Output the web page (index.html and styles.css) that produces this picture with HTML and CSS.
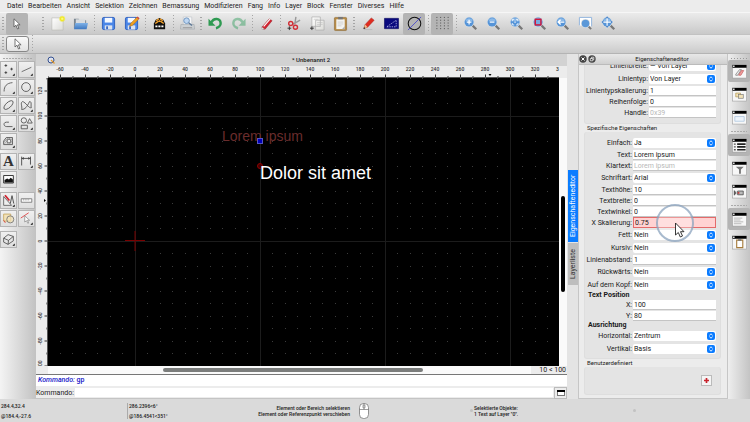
FILE: index.html
```
<!DOCTYPE html>
<html lang="de">
<head>
<meta charset="utf-8">
<title>Unbenannt 2</title>
<link rel="stylesheet" href="styles.css">
</head>
<body>

<!-- Shared icon parts -->
<svg class="defs" width="0" height="0">
	<defs>
		<linearGradient id="paper" x1="0" y1="0" x2="1" y2="1"><stop offset="0" stop-color="#ffffff"/><stop offset="1" stop-color="#dcdcd8"/></linearGradient>
		<radialGradient id="sun"><stop offset="0" stop-color="#ffffa0"/><stop offset="0.5" stop-color="#f0e820"/><stop offset="1" stop-color="#f0e820" stop-opacity="0"/></radialGradient>
		<linearGradient id="blue" x1="0" y1="0" x2="0" y2="1"><stop offset="0" stop-color="#7fb2e8"/><stop offset="1" stop-color="#3f78c0"/></linearGradient>
		<symbol id="arrow" viewBox="0 0 8 12"><path d="M1 .8V9l2-1.8L4.5 11l1.4-.6L4.4 6.8h2.7z" fill="#fff" stroke="#555" stroke-width=".8"/></symbol>
		<symbol id="lens" viewBox="0 0 16 16"><path d="M9.5 9.5l4.6 4.6" stroke="#777" stroke-width="2.4"/><circle cx="6.5" cy="6.5" r="5.6" fill="#d3dbe2"/><circle cx="6.5" cy="6.5" r="4.8" fill="#5594d8"/><path d="M2.6 5.5a4 4 0 0 1 7.8 0z" fill="#8bb9e8"/></symbol>
		<symbol id="floppy" viewBox="0 0 16 16"><rect x="1.5" y="1.5" width="13" height="13" rx="1.5" fill="#4a86e8" stroke="#2f60bd"/><path d="M4 2h8v5H4z" fill="#f4f8ff"/><path d="M4 10h8v4.500H4z" fill="#dce3ee"/><path d="M5.500 11h2v3h-2z" fill="#3b6ac4"/></symbol>
		<symbol id="window" viewBox="0 0 16 16"><rect x=".5" y="1" width="15" height="14" fill="#f7f7f7" stroke="#999" stroke-width=".6"/><path d="M.5 1h15v3H.5z" fill="#000"/><path d="M1.200 1.700h1.500v1.500H1.200z" fill="#fff"/></symbol>
		<symbol id="corner" viewBox="0 0 17 17"><path d="M15.500 13v2.500H13z" fill="#000"/></symbol>
		<symbol id="updown" viewBox="0 0 8 8"><rect width="8" height="8" rx="2" fill="#0a7bff"/><path d="M2.400 3.300L4 1.800l1.600 1.500M2.400 4.700L4 6.200l1.600-1.500" fill="none" stroke="#fff" stroke-width=".9"/></symbol>
	</defs>
</svg>

<nav class="menubar">
	<a href="#">Datei</a><a href="#">Bearbeiten</a><a href="#">Ansicht</a><a href="#">Selektion</a><a href="#">Zeichnen</a><a href="#">Bemassung</a><a href="#">Modifizieren</a><a href="#">Fang</a><a href="#">Info</a><a href="#">Layer</a><a href="#">Block</a><a href="#">Fenster</a><a href="#">Diverses</a><a href="#">Hilfe</a>
</nav>

<div class="toolbar">
	<span class="grip"></span>
	<button class="tool pressed" aria-label="Zurücksetzen"><svg class="pointer"><use href="#arrow"/></svg></button>
	<span class="grip grip-gap"></span>
	<button class="tool" aria-label="Neu"><svg viewBox="0 0 16 16"><path d="M2 2h12v13H2z" fill="url(#paper)" stroke="#b5b5ae" stroke-width=".6"/><circle cx="13" cy="3" r="3.800" fill="url(#sun)"/></svg></button>
	<button class="tool" aria-label="Öffnen"><svg viewBox="0 0 16 16"><path d="M1 13V3h5l1 1.500h7V13z" fill="#7b8792"/><path d="M3 3.500h10v5H3z" fill="#d9dcdf"/><path d="M2.500 7.500H16L14.500 14H1z" fill="url(#blue)"/></svg></button>
	<span class="sep"></span>
	<button class="tool" aria-label="Speichern"><svg><use href="#floppy"/></svg></button>
	<button class="tool" aria-label="Speichern unter"><svg viewBox="0 0 16 16"><use href="#floppy"/><path d="M6 11l1-3 7-7 2 2-7 7z" fill="#f0a020" stroke="#a86410" stroke-width=".5"/><path d="M13.500 1.500L14.500.5l2 2-1 1z" fill="#d04040"/></svg></button>
	<span class="sep"></span>
	<button class="tool" aria-label="SVG Export"><svg viewBox="0 0 16 16"><path d="M8 2l4 2 2 4v6H2V8l2-4z" fill="#111"/><path d="M4.500 5l3-2M11.500 5l-3-2M3.500 8L7 5.500M12.500 8L9 5.500M8 4.500v2" stroke="#f6a32c" stroke-width="1.400"/><path d="M3 8.800h10v4.400H3z" fill="#111"/><path d="M3.600 11h8.800" stroke="#fff" stroke-width="1.800" stroke-dasharray="2.200 1"/></svg></button>
	<span class="sep"></span>
	<button class="tool" aria-label="Druckvorschau"><svg viewBox="0 0 16 16"><path d="M3.500 1h9v9h-9z" fill="#f5f6f8" stroke="#b0b6bd" stroke-width=".5"/><path d="M1 9h14l.5 5H.5z" fill="#ccd0d3" stroke="#9da3a8" stroke-width=".6"/><path d="M3 12.500h10" stroke="#888" stroke-width=".8"/><circle cx="7" cy="5" r="3" fill="#bdd6f2" stroke="#6d94bf"/><path d="M9.200 7.200l3.600 3" stroke="#5d7896" stroke-width="1.500"/></svg></button>
	<span class="grip"></span>
	<button class="tool" aria-label="Rückgängig"><svg viewBox="0 0 16 16"><path d="M3.500 7C6 1.500 13 2 13.500 7.500c.2 3-2.500 5-5 5.500" fill="none" stroke="#2f9a52" stroke-width="2.600"/><path d="M.5 3v7.500H8z" fill="#2f9a52"/></svg></button>
	<button class="tool faded" aria-label="Wiederherstellen"><svg viewBox="0 0 16 16"><path d="M12.500 7C10 1.500 3 2 2.500 7.500c-.2 3 2.500 5 5 5.500" fill="none" stroke="#40a468" stroke-width="2.600"/><path d="M15.500 3v7.500H8z" fill="#40a468"/></svg></button>
	<span class="sep"></span>
	<button class="tool" aria-label="Löschen"><svg viewBox="0 0 16 16"><path d="M3 12l8-9 3 2-7.500 9H4z" fill="#d32430" stroke="#8e1f28" stroke-width=".5"/><path d="M5 11l7-8" stroke="#fff" stroke-width="1.200"/><path d="M2.500 11.500L6 14H3z" fill="#eee" stroke="#999" stroke-width=".4"/></svg></button>
	<span class="sep"></span>
	<button class="tool" aria-label="Ausschneiden"><svg viewBox="0 0 16 16"><path d="M9.500 1L8.300 9M14 4.500L6 9" stroke="#999" stroke-width="1.500"/><circle cx="4" cy="8" r="2.200" fill="none" stroke="#d12f36" stroke-width="1.500"/><circle cx="9" cy="12" r="2.200" fill="none" stroke="#d12f36" stroke-width="1.500"/><path d="M.5 13h4M2.500 11v4" stroke="#222" stroke-width=".9"/></svg></button>
	<button class="tool" aria-label="Kopieren"><svg viewBox="0 0 16 16"><path d="M2 1h9v10H2zM6 4.500h9V15H6z" fill="url(#paper)" stroke="#aaa" stroke-width=".7"/><path d="M7.500 7h6M7.500 9h6M7.500 11h4M4 3.500h5" stroke="#bbb" stroke-width=".6"/><path d="M0 13h4M2 11v4" stroke="#222" stroke-width=".9"/></svg></button>
	<button class="tool" aria-label="Einfügen"><svg viewBox="0 0 16 16"><rect x="1.500" y="1.500" width="13" height="14" rx="1" fill="#b68a45" stroke="#8a6630" stroke-width=".6"/><path d="M3.500 3.500h9v10.500h-9z" fill="#f3f3f0"/><path d="M5.500 1h5v2.500h-5z" fill="#777"/><path d="M5 6.500h6M5 8.500h6M5 10.500h4" stroke="#bbb" stroke-width=".6"/><path d="M12.500 11v3h-3z" fill="#aaa"/></svg></button>
	<span class="grip"></span>
	<button class="tool" aria-label="Stift"><svg viewBox="0 0 16 16"><path d="M3 13l1.500-4L11 2l3 2.500L7 12z" fill="#e02c20" stroke="#9c211a" stroke-width=".5"/><path d="M3 13l1.500-4L7 12z" fill="#efc18a"/><path d="M2.500 13.800l1-2 1.200 1.400z" fill="#222"/><path d="M3 14.500h9" stroke="#aaa" stroke-width=".6"/></svg></button>
	<button class="tool" aria-label="Entwurf"><svg viewBox="0 0 16 16"><path d="M.5 2.500h15v11H.5z" fill="#09097e" stroke="#04045a" stroke-width=".6"/><path d="M3 11.500l10-7v7z" fill="none" stroke="#c8c8f0" stroke-width=".8" stroke-dasharray="1.500 1"/></svg></button>
	<button class="tool pressed" aria-label="Kreis"><svg viewBox="0 0 16 16"><circle cx="8" cy="8" r="6.700" fill="none" stroke="#111" stroke-width="1.100"/><path d="M1 15L15 1" stroke="#3a3ad0" stroke-width=".8"/></svg></button>
	<span class="sep"></span>
	<button class="tool pressed" aria-label="Raster"><svg viewBox="0 0 16 16"><path d="M2 1v14M6 1v14M10 1v14M14 1v14" stroke="#444" stroke-dasharray="1 2"/></svg></button>
	<span class="sep"></span>
	<button class="tool" aria-label="Vergrößern"><svg viewBox="0 0 16 16"><use href="#lens"/><path d="M4 6.500h5M6.500 4v5" stroke="#fff" stroke-width="1.300"/></svg></button>
	<button class="tool" aria-label="Verkleinern"><svg viewBox="0 0 16 16"><use href="#lens"/><path d="M4 6.500h5" stroke="#fff" stroke-width="1.300"/></svg></button>
	<button class="tool" aria-label="Alles zeigen"><svg viewBox="0 0 16 16"><use href="#lens"/><path d="M3.500 5.500v-2h2M7.500 3.500h2v2M9.500 7.500v2h-2M5.500 9.500h-2v-2M5.500 6.500h2" fill="none" stroke="#fff" stroke-width=".9"/></svg></button>
	<button class="tool" aria-label="Auswahl zeigen"><svg viewBox="0 0 16 16"><use href="#lens"/><rect x="3.500" y="3.500" width="6" height="6" fill="#79a9df" stroke="#d4163a" stroke-width="1.500"/></svg></button>
	<button class="tool" aria-label="Vorherige Ansicht"><svg viewBox="0 0 16 16"><use href="#lens"/><path d="M3 6.500h7M6 4L3.300 6.500 6 9" fill="none" stroke="#fff" stroke-width="1.400"/></svg></button>
	<button class="tool" aria-label="Fenster vergrößern"><svg viewBox="0 0 16 16"><path d="M1.500 10V1.500h13V11" fill="#fff" stroke="#8fb3dd"/><path d="M10 10l4 4" stroke="#777" stroke-width="2"/><circle cx="8" cy="8" r="4.800" fill="#d3dbe2"/><circle cx="8" cy="8" r="4" fill="#5b98d8"/></svg></button>
	<button class="tool" aria-label="Verschieben"><svg viewBox="0 0 16 16"><use href="#lens"/><path d="M6.500 0v13M0 6.500h13" stroke="#fff" stroke-width="1.200"/><path d="M6.500 0L8 2.500H5zM6.500 13L8 10.500H5zM0 6.500L2.500 5v3zM13 6.500L10.500 5v3z" fill="#4a82c4"/></svg></button>
</div>

<div class="options">
	<span class="grip"></span>
	<button class="option" aria-label="Auswahl"><svg class="pointer"><use href="#arrow"/></svg></button>
	<span class="sep"></span>
</div>

<div class="work">
	<div class="palette">
		<span class="dash"></span>
		<div class="tools">
			<button aria-label="Punkt"><svg viewBox="0 0 17 17"><path d="M4 4h3M5.500 2.500v3M10.500 8h3M12 6.500v3M4 12h3M5.500 10.500v3" stroke="#333" stroke-width=".9"/><use href="#corner"/></svg></button>
			<button aria-label="Linie"><svg viewBox="0 0 17 17"><path d="M3 11l11-5" stroke="#555" stroke-width=".9"/><use href="#corner"/></svg></button>
			<button aria-label="Bogen"><svg viewBox="0 0 17 17"><path d="M3.500 13c0-6 3-9.500 9.500-10" fill="none" stroke="#555"/><use href="#corner"/></svg></button>
			<button aria-label="Kreis"><svg viewBox="0 0 17 17"><circle cx="8" cy="8" r="5" fill="none" stroke="#555"/><use href="#corner"/></svg></button>
			<button aria-label="Ellipse"><svg viewBox="0 0 17 17"><ellipse cx="8.500" cy="8" rx="6.500" ry="3" transform="rotate(-43 8.500 8)" fill="none" stroke="#555"/><use href="#corner"/></svg></button>
			<button aria-label="Spline"><svg viewBox="0 0 17 17"><path d="M4 4c-3 2 0 5-1 9 4 0 6-3 9-9 3 0 1 5 2 7-3 1-6-6-10-7z" fill="none" stroke="#555"/><use href="#corner"/></svg></button>
			<button aria-label="Polylinie"><svg viewBox="0 0 17 17"><path d="M13 12H6.500C2.500 12 2.500 7 6 7h3" fill="none" stroke="#555"/><use href="#corner"/></svg></button>
			<button aria-label="Form"><svg viewBox="0 0 17 17"><circle cx="5.500" cy="5" r="3" fill="none" stroke="#555"/><path d="M12 3l3 5H9.500zM2.500 10.500h7v4h-7z" fill="none" stroke="#555"/><use href="#corner"/></svg></button>
			<button aria-label="Schraffur"><svg viewBox="0 0 17 17"><path d="M3 12V8l3-4h7v8z" fill="#ddd" stroke="#555"/><path d="M4 11l7-7M6 12l7-7M3.500 9l5-5M9 12l4-4" stroke="#777" stroke-width=".6"/><circle cx="9" cy="8" r="2.200" fill="#eee" stroke="#555"/><use href="#corner"/></svg></button>
		</div>
		<div class="tools">
			<button class="letter" aria-label="Text">A</button>
			<button aria-label="Bemaßung"><svg viewBox="0 0 17 17"><path d="M3 3v10M13 3v9M3 5h10" fill="none" stroke="#444"/><path d="M3 5l2.500-1.500v3zM13 5l-2.500-1.500v3z" fill="#444"/><use href="#corner"/></svg></button>
			<button aria-label="Bild"><svg viewBox="0 0 17 17"><path d="M3 4h11v8.500H3z" fill="#fff" stroke="#222"/><path d="M4 12v-3l3-1.500 2 1 2-2 2.500 2v3.500z" fill="#111"/></svg></button>
		</div>
		<div class="tools spaced">
			<button aria-label="Modifizieren"><svg viewBox="0 0 17 17"><path d="M3 4v10h9z" fill="#eee" stroke="#555" stroke-width=".9"/><path d="M4.500 2.500l5 6" stroke="#cf2430" stroke-width="2"/><path d="M12.500 3l-2 9M12.500 3l2 9" stroke="#444"/><use href="#corner"/></svg></button>
			<button aria-label="Messen"><svg viewBox="0 0 17 17"><path d="M2.500 6.500h12v4h-12z" fill="#fff" stroke="#777"/><path d="M5 7v1.500M7 7v1.500M9 7v1.500M11 7v1.500" stroke="#777" stroke-width=".7"/></svg></button>
			<button aria-label="Block"><svg viewBox="0 0 17 17"><path d="M3 3.500h8v8H3z" fill="#f2e2b8" stroke="#c7a860"/><circle cx="10.500" cy="9.500" r="4" fill="#f2e2b8" fill-opacity=".7" stroke="#777"/><path d="M3 10.500l2 3" stroke="#d44"/></svg></button>
			<button aria-label="Fangen"><svg viewBox="0 0 17 17"><path d="M2 8l9-6" stroke="#e04040"/><path d="M6.500 5.500v7l2-1.500 1.500 3 1-.6L9.600 10.500H12z" fill="#fff" stroke="#777" stroke-width=".7"/><use href="#corner"/></svg></button>
		</div>
		<div class="tools spaced">
			<button aria-label="Isometrie"><svg viewBox="0 0 17 17"><path d="M3 7l5-4 6 2v5l-6 4-5-2.500zM3 7l5.500 2.500L14 5M8.500 9.500L8 14" fill="none" stroke="#444" stroke-width=".9"/><use href="#corner"/></svg></button>
		</div>
	</div>

	<main class="document">
		<div class="titlebar">
			<svg class="logo" viewBox="0 0 8 8"><circle cx="4" cy="4" r="3" fill="#dfe5f2" stroke="#35508e"/><path d="M4 4l3.500 3.500" stroke="#e39a2d" stroke-width="1.300"/></svg>
			<span>* Unbenannt 2</span>
		</div>
		<div class="sheet">
			<svg class="ruler-top">
				<defs><pattern id="ticks-x" x="2" y="0" width="25" height="12" patternUnits="userSpaceOnUse"><path d="M9.500 10h1v2h-1zM22 8.500h1V12h-1z" fill="#333"/></pattern></defs>
				<rect x="12" width="511" height="12" fill="url(#ticks-x)"/>
				<path d="M12 11.500h511" stroke="#555"/>
				<g text-anchor="middle">
					<text x="24" y="5">-60</text><text x="49" y="5">-40</text><text x="74" y="5">-20</text><text x="99" y="5">0</text><text x="124" y="5">20</text><text x="149" y="5">40</text><text x="174" y="5">60</text><text x="199" y="5">80</text><text x="224" y="5">100</text><text x="249" y="5">120</text><text x="274" y="5">140</text><text x="299" y="5">160</text><text x="324" y="5">180</text><text x="349" y="5">200</text><text x="374" y="5">220</text><text x="399" y="5">240</text><text x="424" y="5">260</text><text x="449" y="5">280</text><text x="474" y="5">300</text><text x="499" y="5">320</text>
				</g>
				<text x="520" y="5">3</text>
				<path d="M452.500 8h3L454 10z"/>
			</svg>
			<svg class="ruler-left">
				<defs><pattern id="ticks-y" x="0" y="2.500" width="12" height="25" patternUnits="userSpaceOnUse"><path d="M8.500 10H12v1H8.500zM10 22.500h2v1h-2z" fill="#333"/></pattern></defs>
				<rect width="12" height="288" fill="url(#ticks-y)"/>
				<path d="M11.500 0v288" stroke="#555"/>
				<g text-anchor="middle">
					<text transform="translate(6 13) rotate(-90)">120</text><text transform="translate(6 38) rotate(-90)">100</text><text transform="translate(6 63) rotate(-90)">80</text><text transform="translate(6 88) rotate(-90)">60</text><text transform="translate(6 113) rotate(-90)">40</text><text transform="translate(6 138) rotate(-90)">20</text><text transform="translate(6 163) rotate(-90)">0</text><text transform="translate(6 188) rotate(-90)">-20</text><text transform="translate(6 213) rotate(-90)">-40</text><text transform="translate(6 238) rotate(-90)">-60</text><text transform="translate(6 263) rotate(-90)">-80</text>
				</g>
				<text transform="translate(6 288) rotate(-90)">00</text>
				<path d="M8 121v3l2-1.500z"/>
			</svg>
			<svg class="canvas">
				<defs>
					<pattern id="dots" x="-1" y="0" width="25" height="25" patternUnits="userSpaceOnUse"><path d="M0 0h1v1H0zM13 0h1v1h-1zM0 13h1v1H0zM13 13h1v1h-1z" fill="#3c3c3c"/></pattern>
					<pattern id="grid" x="87" y="38" width="125" height="125" patternUnits="userSpaceOnUse"><path d="M0 0h1v125H0zM0 0h125v1H0z" fill="#1c1c1c"/></pattern>
				</defs>
				<rect width="100%" height="100%" fill="#000"/>
				<rect width="100%" height="100%" fill="url(#dots)"/>
				<rect width="100%" height="100%" fill="url(#grid)"/>
				<path d="M77 162.500h20M87 153v20" stroke="#7a0000"/>
				<text class="lorem" x="174" y="63">Lorem ipsum</text>
				<rect x="209.500" y="60.500" width="5" height="5" fill="#0000b8" stroke="#5656c0"/>
				<circle cx="212" cy="88" r="2.500" fill="#400" stroke="#900000"/>
				<text class="dolor" x="212" y="101">Dolor sit amet</text>
			</svg>
			<div class="vscroll"><span></span></div>
			<div class="hscroll"><span></span></div>
			<div class="scale">10 &lt; 100</div>
		</div>
		<div class="history"><i>Kommando:</i> gp</div>
		<div class="command">
			<label for="cmd">Kommando:</label>
			<input id="cmd" type="text">
			<button aria-label="Verlauf"><svg viewBox="0 0 8 6"><rect x=".5" y=".5" width="7" height="5" fill="#fff" stroke="#777"/><path d="M0 0h8v2H0z"/></svg></button>
		</div>
	</main>

	<div class="tabs">
		<button class="active">Eigenschafteneditor</button>
		<button>Layerliste</button>
	</div>

	<aside class="dock">
		<header>
			<button aria-label="Schließen"><svg viewBox="0 0 8 8"><circle cx="4" cy="4" r="3.700" fill="#444"/><path d="M2.500 2.500l3 3M5.500 2.500l-3 3" stroke="#fff"/></svg></button>
			<button aria-label="Ablösen"><svg viewBox="0 0 8 8"><circle cx="4" cy="4" r="3.700" fill="#444"/><path d="M2.300 3.500h2.500v2.300H2.300zM3.500 3.500V2.200h2.300v2.500h-1" fill="none" stroke="#fff" stroke-width=".7"/></svg></button>
			<h1>Eigenschafteneditor</h1>
		</header>
		<div class="props">
			<div class="group general">
				<div class="row choice"><label for="lw">Linienbreite:</label><span class="combo"><select id="lw"><option>— Von Layer</option></select><svg><use href="#updown"/></svg></span></div>
				<div class="row choice"><label for="lt">Linientyp:</label><span class="combo"><select id="lt"><option>Von Layer</option></select><svg><use href="#updown"/></svg></span></div>
				<div class="row"><label for="ls">Linientypskalierung:</label><input id="ls" value="1"></div>
				<div class="row"><label for="order">Reihenfolge:</label><input id="order" value="0"></div>
				<div class="row"><label for="handle">Handle:</label><input id="handle" value="0x39" disabled></div>
			</div>
			<h2>Spezifische Eigenschaften</h2>
			<div class="group">
				<div class="row choice"><label for="simple">Einfach:</label><span class="combo"><select id="simple"><option>Ja</option></select><svg><use href="#updown"/></svg></span></div>
				<div class="row"><label for="text">Text:</label><input id="text" value="Lorem ipsum"></div>
				<div class="row"><label for="plain">Klartext:</label><input id="plain" value="Lorem ipsum" disabled></div>
				<div class="row choice"><label for="font">Schriftart:</label><span class="combo"><select id="font"><option>Arial</option></select><svg><use href="#updown"/></svg></span></div>
				<div class="row"><label for="th">Texthöhe:</label><input id="th" value="10"></div>
				<div class="row"><label for="tw">Textbreite:</label><input id="tw" value="0"></div>
				<div class="row"><label for="ta">Textwinkel:</label><input id="ta" value="0"></div>
				<div class="row marked">
					<label for="xs">X Skalierung:</label><input id="xs" value="0.75">
					<svg class="click" viewBox="0 0 40 40"><circle cx="20" cy="20" r="18" fill="#fff" fill-opacity=".3" stroke="#8ba3bd" stroke-opacity=".75" stroke-width="2"/><path d="M20.500 20v12l2.800-2.500 2 4.500 2.200-1-2-4.300h3.500z" fill="#fff" stroke="#222" stroke-width=".9"/></svg>
				</div>
				<div class="row choice"><label for="bold">Fett:</label><span class="combo"><select id="bold"><option>Nein</option></select><svg><use href="#updown"/></svg></span></div>
				<div class="row choice"><label for="italic">Kursiv:</label><span class="combo"><select id="italic"><option>Nein</option></select><svg><use href="#updown"/></svg></span></div>
				<div class="row"><label for="spacing">Linienabstand:</label><input id="spacing" value="1"></div>
				<div class="row choice"><label for="back">Rückwärts:</label><span class="combo"><select id="back"><option>Nein</option></select><svg><use href="#updown"/></svg></span></div>
				<div class="row choice"><label for="flip">Auf dem Kopf:</label><span class="combo"><select id="flip"><option>Nein</option></select><svg><use href="#updown"/></svg></span></div>
				<h3>Text Position</h3>
				<div class="row"><label for="px">X:</label><input id="px" value="100"></div>
				<div class="row"><label for="py">Y:</label><input id="py" value="80"></div>
				<h3>Ausrichtung</h3>
				<div class="row choice"><label for="ha">Horizontal:</label><span class="combo"><select id="ha"><option>Zentrum</option></select><svg><use href="#updown"/></svg></span></div>
				<div class="row choice"><label for="va">Vertikal:</label><span class="combo"><select id="va"><option>Basis</option></select><svg><use href="#updown"/></svg></span></div>
			</div>
			<h2>Benutzerdefiniert</h2>
			<div class="group custom">
				<button aria-label="Hinzufügen"><svg viewBox="0 0 6 6"><path d="M0 3h6M3 0v6" stroke="#c8232c" stroke-width="2"/></svg></button>
			</div>
		</div>
	</aside>

	<div class="panels">
		<span class="dots-handle"></span>
		<button class="tool pressed" aria-label="Eigenschaften"><svg viewBox="0 0 16 16"><use href="#window"/><path d="M4 11l4-5h2l-4 6H4z" fill="#eee" stroke="#555" stroke-width=".6"/><path d="M7 12l3-5h2.500l-3 5z" fill="#f0a0a0" stroke="#b44" stroke-width=".6"/></svg></button>
		<button class="tool" aria-label="Blockliste"><svg viewBox="0 0 16 16"><use href="#window"/><path d="M4 6.500h5v4H4z" fill="#f2e2b8" stroke="#b09248" stroke-width=".7"/><rect x="7" y="8" width="5" height="4" fill="#f2e2b8" stroke="#777" stroke-width=".7"/></svg></button>
		<button class="tool" aria-label="Ansichten"><svg viewBox="0 0 16 16"><use href="#window"/><path d="M3 7h10v5H3z" fill="#eef4fa" stroke="#a9c3dd" stroke-width=".8"/></svg></button>
		<span class="sep-row"></span>
		<button class="tool pressed" aria-label="Eigenschaftenliste"><svg viewBox="0 0 16 16"><use href="#window"/><path d="M5.500 6.500h9M5.500 9.500h9M5.500 12.500h9" stroke="#222" stroke-width="1.800"/><path d="M2 6.500h2M2 9.500h2M2 12.500h2" stroke="#555" stroke-width="1.400"/></svg></button>
		<button class="tool" aria-label="Filter"><svg viewBox="0 0 16 16"><use href="#window"/><path d="M4 6h8.500L9.500 9v4.500h-2V9z" fill="#777"/></svg></button>
		<button class="tool" aria-label="Bibliothek"><svg viewBox="0 0 16 16"><use href="#window"/><path d="M2.500 7v5M4 8v3" stroke="#333"/><path d="M6 7.500h6v4H6z" fill="#bbb" stroke="#444" stroke-width=".8"/><circle cx="7" cy="9.500" r="1" fill="#c33"/></svg></button>
		<span class="sep-row"></span>
		<button class="tool pressed" aria-label="Kommandozeile"><svg viewBox="0 0 16 16"><use href="#window"/><path d="M2 6.500h9M2 8.500h7M2 10.500h10M2 12.500h8" stroke="#999" stroke-width=".7"/></svg></button>
		<button class="tool" aria-label="Zwischenablage"><svg viewBox="0 0 16 16"><use href="#window"/><path d="M5 5.500h6.500v8H5z" fill="#fff" stroke="#a67c3c" stroke-width="1.200"/><path d="M6.500 4.500h3.500v1.700H6.500z" fill="#777"/></svg></button>
	</div>
</div>

<footer class="status">
	<div class="coords"><span>284.4,32.4</span><span>@184.4,-27.6</span></div>
	<div class="coords polar"><span>286.2396&lt;6°</span><span>@186.4541&lt;351°</span></div>
	<div class="hint"><span>Element oder Bereich selektieren</span><span>Element oder Referenzpunkt verschieben</span></div>
	<svg class="mouse" viewBox="0 0 10 16"><rect x=".5" y=".5" width="9" height="15" rx="4" fill="#fff" stroke="#777" stroke-width=".8"/><path d="M.5 6.500h9M5 0v2M5 5v1.500" stroke="#777" stroke-width=".7"/><rect x="4" y="1.800" width="2" height="3.400" rx="1" fill="#ddd" stroke="#555" stroke-width=".6"/></svg>
	<span class="dot"></span>
	<div class="selection"><span>Selektierte Objekte:</span><span>1 Text auf Layer "0".</span></div>
	<span class="dot"></span>
</footer>

</body>
</html>
```
FILE: styles.css
```
* {
	box-sizing: border-box;
}
body {
	margin: 0;
	height: 100vh;
	display: flex;
	flex-direction: column;
	overflow: hidden;
	background: #ececec;
	color: #1a1a1a;
	font-family: Roboto, "Liberation Sans", sans-serif;
	font-size: 7px;
	line-height: 8px;
}
button, input, select {
	font: inherit;
	color: inherit;
	margin: 0;
	padding: 0;
	border: 0;
	border-radius: 0;
	background: none;
	outline: none;
}
svg {
	display: block;
}
.defs {
	position: absolute;
}
h1, h2, h3 {
	margin: 0;
	font-size: 6px;
	font-weight: 400;
}

/* menu and toolbars */
.menubar {
	flex: none;
	height: 12px;
	display: flex;
	align-items: center;
	gap: 5px;
	padding-left: 7px;
	background: #ececec;
}
.menubar a {
	color: #222;
	text-decoration: none;
}
.toolbar, .options {
	flex: none;
	display: flex;
	align-items: center;
	gap: 1px;
	padding-left: 1px;
}
.toolbar {
	height: 23px;
	background: linear-gradient(#ebebeb, #c9c9c9);
	border-top: 1px solid #f6f6f6;
	border-bottom: 1px solid #c2c2c2;
}
.options {
	height: 19px;
	background: linear-gradient(#ebebeb, #cbcbcb);
	border-bottom: 1px solid #b4b4b4;
}
.grip, .sep {
	flex: none;
	width: 4px;
	height: 18px;
	background: repeating-linear-gradient(#a5a5a5 0 1px, transparent 1px 3px) center / 1px 100% no-repeat;
}
.grip {
	background-size: 2px 14px;
}
.grip-gap {
	margin-left: 12px;
}
.tool {
	flex: none;
	width: 22px;
	height: 22px;
	display: grid;
	place-items: center;
	border-radius: 2px;
}
.tool svg {
	width: 15px;
	height: 15px;
	overflow: visible;
}
.tool .pointer, .option .pointer {
	width: 8px;
	height: 12px;
}
.pressed {
	background: #b4b4b4;
}
.faded {
	opacity: 0.5;
}
.option {
	width: 23px;
	height: 16px;
	display: grid;
	place-items: center;
	border: 1px solid #888;
	border-radius: 3px;
	background: linear-gradient(#fafafa, #e2e2e2);
}

.work {
	flex: 1;
	min-height: 0;
	display: flex;
}

/* drawing tools */
.palette {
	flex: none;
	width: 36px;
	background: linear-gradient(to right, #f4f4f4, #c2c2c2);
}
.dash {
	display: block;
	height: 7px;
	margin: 0 3px;
	background: repeating-linear-gradient(to right, #aaa 0 2px, transparent 2px 3px) 0 4px / 100% 1px no-repeat;
}
.tools {
	display: grid;
	grid-template-columns: 17px 17px;
	gap: 1px;
	margin-bottom: 3px;
}
.spaced {
	margin-top: 4px;
}
.tools button {
	height: 17px;
	background: linear-gradient(#f0f0f0, #dedede);
	border: 1px solid #b4b4b4;
}
.tools svg {
	width: 15px;
	height: 15px;
}
.tools .letter {
	font: bold 15px/15px "Liberation Serif", serif;
	color: #333;
}

/* drawing area */
.document {
	flex: 1;
	min-width: 0;
	display: flex;
	flex-direction: column;
	background: #ececec;
}
.titlebar {
	flex: none;
	height: 12px;
	display: grid;
	grid-template-columns: 12px 1fr;
	align-items: center;
	padding: 0 4px 0 11px;
	background: #d2d2d2;
	font-size: 6px;
	font-weight: 500;
	text-align: center;
}
.logo {
	width: 8px;
	height: 8px;
}
.sheet {
	flex: 1;
	min-height: 0;
	display: grid;
	grid-template-columns: 12px 1fr 8px;
	grid-template-rows: 12px 1fr 8px;
	border-bottom: 1px solid #777;
}
.sheet svg {
	width: 100%;
	height: 100%;
	overflow: hidden;
}
.ruler-top {
	grid-area: 1 / 1 / 2 / 4;
}
.ruler-left {
	grid-area: 2 / 1;
}
.ruler-top text, .ruler-left text {
	font-size: 5px;
	font-weight: 500;
	fill: #333;
}
.canvas {
	grid-area: 2 / 2;
}
.lorem, .dolor {
	font-family: "Liberation Sans", Arial, sans-serif;
	font-size: 18px;
	fill: #fff;
}
.lorem {
	font-size: 14px;
	fill: #6a2c2c;
}
.vscroll {
	grid-area: 2 / 3;
	background: #fafafa;
	padding: 118px 2px 74px;
}
.vscroll span {
	display: block;
	height: 100%;
	border-radius: 2px;
	background: #000;
}
.hscroll {
	grid-area: 3 / 2;
	background: #fafafa;
	padding: 2px 136px 2px 115px;
}
.hscroll span {
	display: block;
	height: 4px;
	border-radius: 2px;
	background: #7b7d7c;
}
.scale {
	grid-area: 3 / 2 / 4 / 4;
	justify-self: end;
	padding: 0 1px 0 8px;
	background: #ececec;
}
.history {
	flex: none;
	height: 11px;
	padding: 1px 2px;
	background: #fff;
	color: #1414c8;
	font-weight: 500;
}
.command {
	flex: none;
	height: 13px;
	display: flex;
	align-items: center;
	gap: 1px;
	padding-top: 1px;
	border-bottom: 1px solid #c4c4c4;
}
.command input {
	flex: 1;
	min-width: 0;
	height: 9px;
	background: #fff;
}
.command button {
	width: 13px;
	height: 12px;
	display: grid;
	place-items: center;
	border: 1px solid #bbb;
}
.command svg {
	width: 8px;
	height: 6px;
}

/* dock tabs */
.tabs {
	flex: none;
	width: 11px;
	padding: 116px 0 0 1px;
	display: flex;
	flex-direction: column;
	gap: 1px;
	background: #e4e4e4;
}
.tabs button {
	writing-mode: vertical-rl;
	transform: rotate(180deg);
	height: 42px;
	line-height: 10px;
	background: #bebebe;
	color: #333;
	text-align: center;
}
.tabs .active {
	height: 72px;
	background: #0a7cff;
	color: #fff;
}

/* property editor */
.dock {
	flex: none;
	width: 150px;
	display: flex;
	flex-direction: column;
	border: 1px solid #c6c6c6;
	border-top: 0;
	background: #ececec;
}
.dock header {
	flex: none;
	height: 11px;
	display: flex;
	align-items: center;
	gap: 1px;
	background: linear-gradient(#e8e8e8, #d0d0d0);
	border-bottom: 1px solid #bbb;
}
.dock header svg {
	width: 8px;
	height: 8px;
}
.dock h1 {
	flex: 1;
	text-align: center;
}
.props {
	flex: 1;
	min-height: 0;
	overflow: hidden;
	padding: 0 6px 0 5px;
}
.group {
	padding: 4px 4px 3px 3px;
	border: 1px solid #dedede;
	border-top: 0;
	border-radius: 3px;
	background: #e4e4e4;
}
/* scrolled partly under the header */
.general {
	margin-top: -10px;
	padding-bottom: 5px;
}
.row {
	height: 11px;
	display: grid;
	grid-template-columns: 44px 1fr;
	align-items: center;
	gap: 1px;
}
.general .row {
	grid-template-columns: 60px 1fr;
}
.choice {
	height: 13px;
}
.row label {
	justify-self: end;
	white-space: nowrap;
}
.row input {
	width: 100%;
	min-width: 0;
	height: 10px;
	padding: 1px 0 0 1px;
	background: #fff;
	border-bottom: 1px solid #c4c4c4;
}
.row input:disabled {
	color: #b8b8b8;
}
.combo {
	min-width: 0;
	height: 10px;
	display: flex;
	align-items: center;
	padding-right: 1px;
	border-radius: 2px;
	background: #fff;
}
.combo select {
	flex: 1;
	min-width: 0;
	padding-left: 1px;
	appearance: none;
}
.combo svg {
	flex: none;
	width: 8px;
	height: 8px;
}
.marked {
	position: relative;
}
.marked input {
	height: 11px;
	padding-top: 0;
	background: #ffd2d2;
	border: 1px solid #e46a6a;
}
.click {
	position: absolute;
	left: 67px;
	top: -14px;
	width: 40px;
	height: 40px;
}
.dock h2 {
	height: 8px;
	padding-left: 3px;
}
.dock h3 {
	height: 8px;
	font-size: 7px;
	font-weight: 700;
}
.custom {
	display: flex;
	justify-content: end;
	padding: 8px;
}
.custom button {
	width: 11px;
	height: 11px;
	display: grid;
	place-items: center;
	border: 1px solid #bbb;
	background: #f5f5f5;
}
.custom svg {
	width: 5px;
	height: 5px;
}

/* panel switches */
.panels {
	flex: none;
	width: 22px;
	display: flex;
	flex-direction: column;
	gap: 1px;
	background: linear-gradient(to right, #eee, #c4c4c4);
}
.dots-handle, .sep-row {
	height: 4px;
	margin: 0 3px;
	background: repeating-linear-gradient(to right, #aaa 0 2px, transparent 2px 3px) 0 2px / 100% 1px no-repeat;
}
.dots-handle {
	height: 5px;
	background: repeating-linear-gradient(to right, #999 0 1px, transparent 1px 3px) 0 4px / 100% 1px no-repeat;
}

/* status bar */
.status {
	flex: none;
	height: 23px;
	display: flex;
	align-items: center;
	background: #dadada;
	font-size: 5px;
	font-weight: 500;
	line-height: 6px;
}
.status div {
	display: flex;
	flex-direction: column;
}
.status .coords {
	width: 127px;
	padding-left: 1px;
	gap: 4px;
}
.status .polar {
	border-left: 1px solid #aaa;
}
.status .hint {
	width: 96px;
	text-align: right;
}
.mouse {
	width: 10px;
	height: 16px;
	margin: 0 101px 0 9px;
}
.status .selection {
	width: 160px;
	padding-left: 1px;
}
.dot {
	width: 3px;
	height: 3px;
	border-radius: 2px;
	background: #c2c2c2;
}
```
